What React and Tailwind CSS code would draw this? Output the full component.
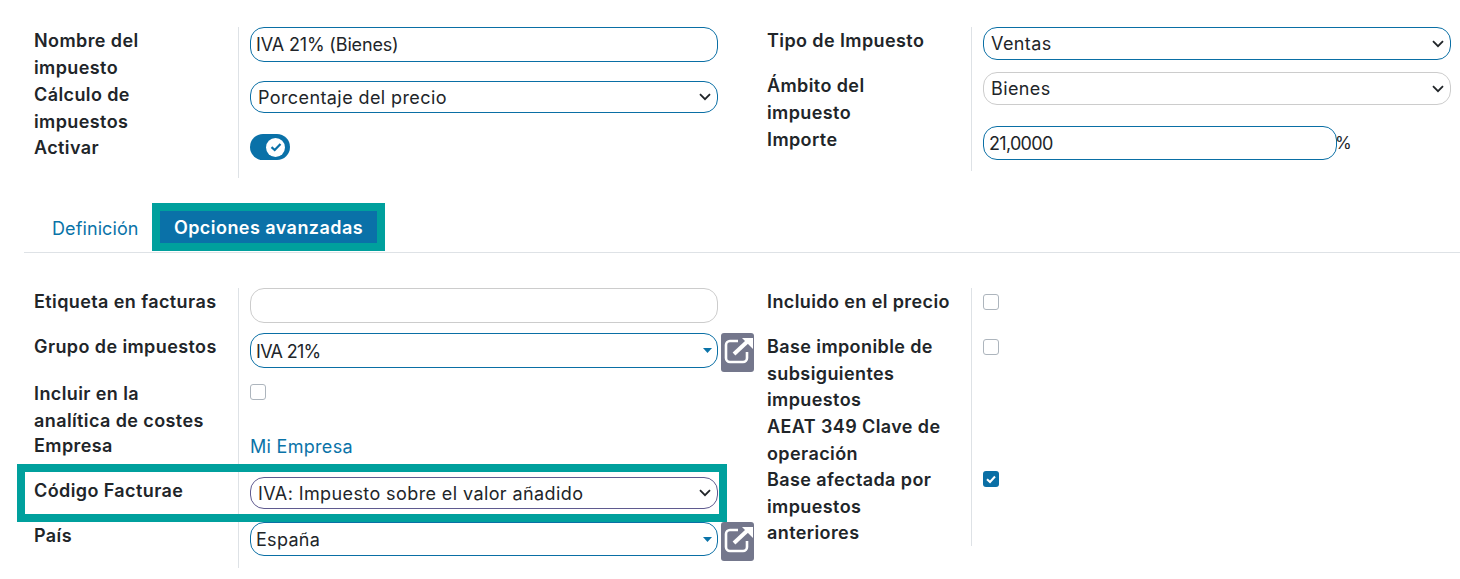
import React from 'react';

const font = "font-['Inter','Open_Sans',sans-serif]";
const text = 'text-[18px] text-[#212529]';

function Row({ label, height, children }) {
  return (
    <div className="flex" style={{ height }}>
      <div className="w-[204px] shrink-0 pt-px text-[18px] tracking-[0.4px] leading-[26.6px] font-semibold text-[#212529]">
        {label.map((line) => (
          <div key={line} className="whitespace-nowrap">{line}</div>
        ))}
      </div>
      <div className="flex-1 flex items-start gap-[3px] border-l border-[#dee2e6] pl-[11px]">{children}</div>
    </div>
  );
}

function TextInput({ value, width = 'w-[468px]', height = 'h-[35px]', border = 'border-[#0a6fa5]', tracking = 'tracking-[0.3px]' }) {
  return (
    <input
      readOnly
      value={value}
      className={`${width} ${height} rounded-[14px] border ${border} bg-white px-[5px] ${text} ${tracking} outline-none`}
    />
  );
}

function Select({ value, height = 'h-[32px]', border = 'border-[#0a6fa5]' }) {
  return (
    <div className="relative w-[468px]">
      <select
        value={value}
        onChange={() => {}}
        className={`w-full ${height} appearance-none rounded-[14px] border ${border} bg-white px-[7px] ${text} tracking-[0.4px] outline-none`}
      >
        <option>{value}</option>
      </select>
      <svg className="absolute right-[7px] top-1/2 -translate-y-1/2 pointer-events-none" width="12" height="8" viewBox="0 0 12 8" fill="none" stroke="#212529" strokeWidth="1.800">
        <path d="M1 1.200l5 5 5-5" />
      </svg>
    </div>
  );
}

function Many2One({ value, height = 'h-[35px]', tracking = 'tracking-[0.3px]' }) {
  return (
    <>
      <div className={`w-[468px] ${height} flex items-center justify-between rounded-[14px] border border-[#0a6fa5] bg-white pl-[5px] pr-[5px] ${text} ${tracking}`}>
        <span className="pt-px">{value}</span>
        <svg width="9" height="5" viewBox="0 0 9 5">
          <path d="M0 0h9L4.500 5z" fill="#0a73a8" />
        </svg>
      </div>
      <button className="w-[33px] h-[39px] rounded-[3px] bg-[#74778c]">
        <svg width="33" height="39" viewBox="0 0 33 39" fill="none" stroke="white">
          <path d="M26 19v6a4 4 0 0 1-4 4H9a4 4 0 0 1-4-4V12a4 4 0 0 1 4-4h8" strokeWidth="2.600" />
          <path d="M13 21L27 8" strokeWidth="4" />
          <path d="M21 5h11v11z" fill="white" stroke="none" />
        </svg>
      </button>
    </>
  );
}

function Check({ checked }) {
  if (checked) {
    return (
      <span className="block w-4 h-4 rounded-[3px] bg-[#0a6fa5]">
        <svg width="16" height="16" viewBox="0 0 16 16" fill="none" stroke="white" strokeWidth="2">
          <path d="M4 8.200L7 11l5-5.500" />
        </svg>
      </span>
    );
  }
  return <span className="block w-4 h-4 rounded-[3px] border border-[#adb5bd] bg-white" />;
}

function Toggle() {
  return (
    <span className="w-10 h-[26px] rounded-full bg-[#0a71a8] flex items-center justify-end pr-[5px]">
      <span className="w-[19px] h-[19px] rounded-full bg-white flex items-center justify-center">
        <svg width="12" height="12" viewBox="0 0 12 12" fill="none" stroke="#0a71a8" strokeWidth="2.200">
          <path d="M1.500 6.200L4.700 9 10.500 3" />
        </svg>
      </span>
    </span>
  );
}

export default function App() {
  return (
    <div className={`w-[1460px] h-[579px] overflow-hidden bg-white pt-[27px] ${font}`}>
      <div className="flex h-[176px] pl-[34px]">
        <div className="w-[733px]">
          <Row label={['Nombre del', 'impuesto']} height={54}>
            <TextInput value="IVA 21% (Bienes)" tracking="tracking-[-0.15px]" />
          </Row>
          <Row label={['Cálculo de', 'impuestos']} height={53}>
            <Select value="Porcentaje del precio" />
          </Row>
          <Row label={['Activar']} height={44}>
            <Toggle />
          </Row>
        </div>
        <div>
          <Row label={['Tipo de Impuesto']} height={45}>
            <Select value="Ventas" height="h-[33px]" />
          </Row>
          <Row label={['Ámbito del', 'impuesto']} height={54}>
            <Select value="Bienes" height="h-[33px]" border="border-[#cccccc]" />
          </Row>
          <Row label={['Importe']} height={45}>
            <TextInput value="21,0000" width="w-[354px]" height="h-[34px]" tracking="tracking-[-0.7px]" />
            <span className="mt-[5px] -ml-[5px] text-[17px] text-[#212529]">%</span>
          </Row>
        </div>
      </div>

      <div className="ml-6 h-[50px] flex items-start border-b border-[#dee2e6]">
        <a className="mt-[13px] ml-7 w-[100px] text-[18px] tracking-[0.1px] leading-[26px] text-[#0a73a8]">Definición</a>
        <a className="w-[233px] h-[48px] border-8 border-[#00a09d] bg-[#0a71a8] flex items-center justify-center pt-px text-[18px] tracking-[0.45px] font-semibold text-white">
          Opciones avanzadas
        </a>
      </div>

      <div className="flex mt-[35px] pl-[34px]">
        <div className="w-[733px]">
          <Row label={['Etiqueta en facturas']} height={45}>
            <TextInput value="" border="border-[#cccccc]" />
          </Row>
          <Row label={['Grupo de impuestos']} height={47}>
            <Many2One value="IVA 21%" tracking="tracking-[-0.7px]" />
          </Row>
          <Row label={['Incluir en la', 'analítica de costes']} height={52}>
            <div className="mt-1"><Check /></div>
          </Row>
          <Row label={['Empresa']} height={45}>
            <span className="mt-[2px] text-[18px] tracking-[0.3px] leading-[26px] text-[#0a73a8]">Mi Empresa</span>
          </Row>
          <div className="relative">
            <Row label={['Código Facturae']} height={45}>
              <Select value="IVA: Impuesto sobre el valor añadido" border="border-[#5f5a8f]" />
            </Row>
            <div className="absolute -left-[17px] -top-[13px] w-[710px] h-[58px] border-8 border-[#00a09d] pointer-events-none" />
          </div>
          <Row label={['País']} height={46}>
            <Many2One value="España" height="h-[34px]" />
          </Row>
        </div>
        <div>
          <Row label={['Incluido en el precio']} height={45}>
            <div className="mt-[6px]"><Check /></div>
          </Row>
          <Row label={['Base imponible de', 'subsiguientes', 'impuestos']} height={80}>
            <div className="mt-[6px]"><Check /></div>
          </Row>
          <Row label={['AEAT 349 Clave de', 'operación']} height={53}>
            <span />
          </Row>
          <Row label={['Base afectada por', 'impuestos', 'anteriores']} height={80}>
            <div className="mt-[5px]"><Check checked /></div>
          </Row>
        </div>
      </div>
    </div>
  );
}
